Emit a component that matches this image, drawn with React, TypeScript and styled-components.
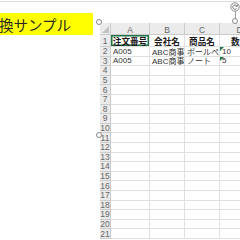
import React from "react";
import styled, { createGlobalStyle, css } from "styled-components";

const GlobalStyle = createGlobalStyle`
  html, body {
    margin: 0;
    padding: 0;
    background: #ffffff;
  }
  body {
    font-family: "Liberation Sans", "Noto Sans CJK JP", sans-serif;
  }
`;

const Page = styled.div`
  position: relative;
  width: 240px;
  height: 240px;
  overflow: hidden;
  background: #ffffff;
  border-top: 1px solid #dcdcdc;
  margin-top: 1px;
  box-sizing: border-box;
  display: flex;
  align-items: flex-start;
  gap: 7px;
`;

const Banner = styled.div`
  margin-top: 11px;
  width: 93px;
  height: 22px;
  flex-shrink: 0;
  background: #ffff00;
  color: #262626;
  font-family: "Noto Sans CJK JP", sans-serif;
  font-size: 14.5px;
  line-height: 24px;
  white-space: nowrap;
  overflow: hidden;
  text-indent: -1px;
`;

const Picture = styled.div`
  margin-top: 19px;
  padding-top: 2px;
  flex-shrink: 0;
  background: #ffffff;
`;

const Sheet = styled.div`
  display: grid;
  grid-template-columns: 11px 39px 35px 35px 40px;
  grid-template-rows: 12px 12px repeat(20, 9.6px);
`;

type Kind = "corner" | "col" | "row" | "data";

const Cell = styled.div<{ $kind: Kind; $center?: boolean; $bold?: boolean; $active?: boolean }>`
  position: relative;
  box-sizing: border-box;
  border-right: 1px solid #e0e0e0;
  border-bottom: 1px solid #e0e0e0;
  overflow: hidden;
  white-space: nowrap;
  font-size: 8px;
  color: #333333;
  padding-left: 2px;
  display: flex;
  align-items: center;
  font-family: "Liberation Sans", "Noto Sans CJK JP", sans-serif;
  ${(p) =>
    p.$center &&
    css`
      justify-content: center;
      padding-left: 0;
    `}
  ${(p) =>
    p.$bold &&
    css`
      font-weight: bold;
      font-size: 8.6px;
      color: #1a1a1a;
    `}
  ${(p) =>
    p.$active &&
    css`
      box-shadow: inset 0 0 0 1.5px #217346;
    `}
  ${(p) =>
    (p.$kind === "col" || p.$kind === "row" || p.$kind === "corner") &&
    css`
      background: #ebebeb;
      color: #666666;
      border-right-color: #cbcbcb;
      border-bottom-color: #cbcbcb;
      justify-content: center;
      padding-left: 0;
      font-size: 8.5px;
    `}
  ${(p) =>
    p.$kind === "col" &&
    css`
      padding-top: 3px;
    `}
`;

const CornerMark = styled.span`
  position: absolute;
  right: 1px;
  bottom: 1px;
  width: 0;
  height: 0;
  border-left: 7px solid transparent;
  border-bottom: 7px solid #c2c2c2;
`;

const ErrorMark = styled.span`
  position: absolute;
  left: 0;
  top: 0;
  width: 0;
  height: 0;
  border-top: 4px solid #1f7a47;
  border-right: 4px solid transparent;
`;

const Handle = styled.span<{ $x: number; $y: number }>`
  position: absolute;
  left: ${(p) => p.$x - 3}px;
  top: ${(p) => p.$y - 3}px;
  width: 6px;
  height: 6px;
  box-sizing: border-box;
  border-radius: 50%;
  border: 1px solid #8a8a8a;
  background: #ffffff;
`;

const RotateLine = styled.span`
  position: absolute;
  left: 235px;
  top: 8px;
  width: 1px;
  height: 10px;
  background: #a0a0a0;
`;

const RotateIcon = styled.svg`
  position: absolute;
  left: 230px;
  top: 0px;
`;

const columns = ["A", "B", "C", "D"];

const rows: { cells: string[]; bold?: boolean; error?: boolean }[] = [
  { cells: ["注文番号", "会社名", "商品名", "数量"], bold: true },
  { cells: ["A005", "ABC商事", "ボールペン", "10"], error: true },
  { cells: ["A005", "ABC商事", "ノート", "5"], error: true },
];

export default function App() {
  const allRows = Array.from({ length: 21 }, (_, i) => rows[i] ?? { cells: ["", "", "", ""] });

  return (
    <>
      <GlobalStyle />
      <Page>
        <Banner>換サンプル</Banner>
        <Picture>
          <Sheet>
            <Cell $kind="corner">
              <CornerMark />
            </Cell>
            {columns.map((c) => (
              <Cell key={c} $kind="col">
                {c}
              </Cell>
            ))}
            {allRows.map((r, i) => (
              <React.Fragment key={i}>
                <Cell $kind="row">{i + 1}</Cell>
                {r.cells.map((text, j) => (
                  <Cell
                    key={j}
                    $kind="data"
                    $center={r.bold}
                    $bold={r.bold}
                    $active={i === 0 && j === 0}
                  >
                    {r.error && j === 3 && <ErrorMark />}
                    {text}
                  </Cell>
                ))}
              </React.Fragment>
            ))}
          </Sheet>
        </Picture>
        <Handle $x={99} $y={20} />
        <Handle $x={99} $y={133} />
        <RotateLine />
        <Handle $x={235} $y={19} />
        <RotateIcon width="10" height="10" viewBox="0 0 10 10">
          <circle cx="5" cy="5" r="4.2" fill="#ffffff" stroke="#8a8a8a" strokeWidth="1" />
          <path d="M7 4.2 A2.2 2.2 0 1 0 6.6 6.6" fill="none" stroke="#7a7a7a" strokeWidth="1" />
          <path d="M7.6 2.6 L7.2 4.6 L5.4 4" fill="none" stroke="#7a7a7a" strokeWidth="0.9" />
        </RotateIcon>
      </Page>
    </>
  );
}
